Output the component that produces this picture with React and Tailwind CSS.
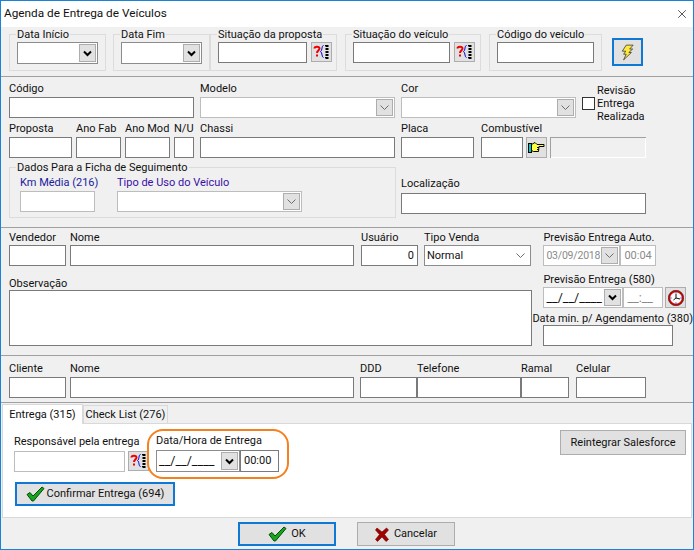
import React from 'react';
import { X } from 'lucide-react';

const inputBorder = 'border border-[#7a7a7a] bg-white';
const softBorder = 'border border-[#bdbdbd] bg-white';

const Chevron = ({ soft }) => (
  <svg width="11" height="7" viewBox="0 0 11 7" fill="none">
    <path d={soft ? 'M1.5 1.5 L5.5 5.5 L9.5 1.5' : 'M2 1.5 L5.5 5 L9 1.5'} stroke={soft ? '#6d6d6d' : '#000'} strokeWidth={soft ? 1 : 2} />
  </svg>
);

const Combo = ({ w, h = 'h-[22px]', soft, thin, flat, value, disabled, mask }) => (
  <div className={`${w} ${h} shrink-0 flex items-stretch ${soft ? softBorder : 'border border-[#8c8c8c] bg-white'} ${disabled ? 'text-[#8a8a8a]' : ''}`}>
    <div className="flex-1 overflow-hidden whitespace-nowrap pl-[2px] flex items-center">
      {mask ? <span className="text-[12.5px]">__/__/____</span> : value}
    </div>
    <div className={`w-[17px] m-[1px] flex items-center justify-center ${flat ? '' : 'border border-[#adadad] bg-[#e1e1e1]'} ${disabled ? 'bg-[#cfcfcf]' : ''}`}>
      <Chevron soft={thin} />
    </div>
  </div>
);

const Box = ({ w, h = 'h-[21px]', soft, right, children, className = '' }) => (
  <div className={`${w} ${h} shrink-0 ${soft ? softBorder : inputBorder} px-[3px] flex items-center ${right ? 'justify-end' : ''} ${className}`}>{children}</div>
);

const Field = ({ label, children, className = '', labelClass = 'leading-[16px]' }) => (
  <div className={`flex flex-col ${className}`}>
    <div className={`h-[16px] whitespace-nowrap ${labelClass}`}>{label}</div>
    {children}
  </div>
);

const IconBtn = ({ children, className = 'w-[21px] h-[20px]' }) => (
  <button className={`${className} border border-[#adadad] bg-[#e1e1e1] flex items-center justify-center shrink-0`}>{children}</button>
);

const HelpIcon = () => (
  <svg width="17" height="16" viewBox="0 0 17 16">
    <path d="M1.5 4.5 C1.5 2.2 6.5 2 6.5 4.5 C6.5 6.5 4 6.5 4 9" fill="none" stroke="#f00000" strokeWidth="2" />
    <rect x="3" y="10.5" width="2" height="2" fill="#f00000" />
    <path d="M10.5 1.5 C8.5 1.5 9.5 6.5 7.5 7.5 C9.5 8.5 8.5 13.5 10.5 13.5" fill="none" stroke="#0000e0" strokeWidth="1" />
    <path d="M14 1 V15" stroke="#000" strokeWidth="3" strokeDasharray="2 1" />
    <path d="M12 1.5 H14 M12 13.5 H14" stroke="#000" strokeWidth="1" />
  </svg>
);

const Bolt = () => (
  <svg width="13" height="17" viewBox="0 0 15 18">
    <path d="M6 0.5 H14 L10 5 H13.5 L9 9 H12 L3 17.5 L6 11 H3 L5.5 7.5 H1.5 Z" fill="#ffe93b" stroke="#333" strokeWidth="0.9" />
  </svg>
);

const Hand = () => (
  <svg width="17" height="13" viewBox="0 0 17 13">
    <rect x="0.5" y="2.5" width="3" height="9" fill="#00c8c8" stroke="#000" strokeWidth="1" />
    <path d="M3.5 3.5 L7 1.5 L9 3.5 H16 V5.5 H11 L10.5 10.5 H5.5 L3.5 9.5 Z" fill="#ffff40" stroke="#000" strokeWidth="1" />
    <path d="M9 6.5 H11 M9 8.5 H10.5" stroke="#000" strokeWidth="1" />
  </svg>
);

const Clock = () => (
  <svg width="16" height="16" viewBox="0 0 16 16">
    <circle cx="8" cy="8" r="6.8" fill="#fafafa" stroke="#d80000" strokeWidth="2" />
    <circle cx="8" cy="8" r="7.7" fill="none" stroke="#222" strokeWidth="0.6" />
    <path d="M8 4 V8 L5.5 10 M8 8 L12 9" fill="none" stroke="#101010" strokeWidth="1" />
    <path d="M8 2.5 V3.5 M8 12.5 V13.5 M2.5 8 H3.5 M12.5 8 H13.5" stroke="#1010c0" strokeWidth="1" />
  </svg>
);

const Check = () => (
  <svg width="19" height="16" viewBox="0 0 19 16">
    <path d="M1 8.5 L4 6.5 L7 10 L16 1 L18 2.5 L7.5 15 H6 Z" fill="#17a51b" stroke="#07480f" strokeWidth="1" />
  </svg>
);

const Cross = () => (
  <svg width="14" height="15" viewBox="0 0 14 15">
    <path d="M2 1 L7 5 L11.5 1 L13.5 3 L9.5 7.5 L13.5 12.5 L11 14.5 L7 10 L2.5 14.5 L0.5 12.5 L4.5 7.5 L0.5 3 Z" fill="#a00000" stroke="#700000" strokeWidth="0.6" />
  </svg>
);

const Group = ({ legend, className = '', children }) => (
  <fieldset className={`border border-[#dcdcdc] min-w-0 ${className}`}>
    <legend className="ml-[6px] px-[1px] h-[14px] leading-[16px] whitespace-nowrap">{legend}</legend>
    {children}
  </fieldset>
);

const Hr = () => <div className="h-[1px] bg-[#a0a0a0]" />;

export default function App() {
  return (
    <div className="w-[694px] h-[550px] border border-[#1883d7] bg-[#f0f0f0] text-[11px] leading-[14px] text-[#111] flex flex-col overflow-hidden font-['Roboto',sans-serif]">
      {/* title bar */}
      <div className="h-[26px] shrink-0 bg-white flex items-center justify-between pl-[3px] pr-[4px]">
        <span className="text-[11.8px] pb-[2px]">Agenda de Entrega de Veículos</span>
        <X className="w-[14px] h-[14px] text-[#111]" strokeWidth={1.2} />
      </div>

      {/* filtros */}
      <div className="h-[49px] shrink-0 flex items-start pl-[8px]">
        <Group legend="Data Início" className="w-[97px] mr-[7px] h-[44px]"><div className="px-[7px] pt-[1px]"><Combo w="w-[81px]" /></div></Group>
        <Group legend="Data Fim" className="w-[97px] h-[44px]"><div className="px-[7px] pt-[1px]"><Combo w="w-[81px]" /></div></Group>
        <Group legend="Situação da proposta" className="w-[127px] mr-[8px] h-[44px]">
          <div className="flex gap-[4px] pl-[7px] pt-[1px]"><Box w="w-[89px]" /><IconBtn><HelpIcon /></IconBtn></div>
        </Group>
        <Group legend="Situação do veículo" className="w-[136px] mr-[8px] h-[44px]">
          <div className="flex gap-[4px] pl-[7px] pt-[1px]"><Box w="w-[97px]" /><IconBtn><HelpIcon /></IconBtn></div>
        </Group>
        <Group legend="Código do veículo" className="w-[113px] mr-[10px] h-[44px]"><div className="px-[7px] pt-[1px]"><Box w="w-[97px]" /></div></Group>
        <button className="w-[31px] h-[28px] mt-[11px] border-2 border-[#0f78d4] bg-[#e1e1e1] flex items-center justify-center"><Bolt /></button>
      </div>
      <Hr />

      {/* veiculo */}
      <div className="h-[150px] shrink-0 pl-[8px] pt-[4px]">
        <div className="flex h-[37px]">
          <Field label="Código" className="w-[185px] mr-[6px]"><Box w="w-[185px]" /></Field>
          <Field label="Modelo" className="w-[195px] mr-[6px]"><Combo w="w-[195px]" h="h-[21px]" soft thin /></Field>
          <Field label="Cor" className="w-[175px] mr-[6px]"><Combo w="w-[175px]" h="h-[21px]" soft thin /></Field>
          <div className="flex items-start h-[37px]">
            <div className="w-[13px] h-[13px] border border-[#333] bg-white mt-[16px] mr-[2px]" />
            <div className="leading-[13px] pt-[3px]">Revisão<br />Entrega<br />Realizada</div>
          </div>
        </div>
        <div className="flex mt-[3px]">
          <Field label="Proposta" className="w-[63px] mr-[4px]"><Box w="w-[63px]" /></Field>
          <Field label="Ano Fab" className="w-[45px] mr-[4px]"><Box w="w-[45px]" /></Field>
          <Field label="Ano Mod" className="w-[45px] mr-[4px]"><Box w="w-[45px]" /></Field>
          <Field label="N/U" className="w-[20px] mr-[6px]"><Box w="w-[20px]" /></Field>
          <Field label="Chassi" className="w-[195px] mr-[6px]"><Box w="w-[195px]" /></Field>
          <Field label="Placa" className="w-[73px] mr-[7px]"><Box w="w-[73px]" /></Field>
          <Field label="Combustível" className="w-[42px] mr-[3px]"><Box w="w-[42px]" /></Field>
          <IconBtn className="w-[21px] h-[21px] mt-[16px] mr-[3px]"><Hand /></IconBtn>
          <div className="w-[96px] h-[21px] mt-[16px] bg-[#f0f0f0] border-l border-t border-[#a0a0a0] shadow-[inset_-1px_-1px_0_#fff]" />
        </div>
        <div className="flex mt-[2px]">
          <Group legend="Dados Para a Ficha de Seguimento" className="w-[387px] h-[58px] mr-[5px]">
            <div className="flex pl-[10px] pt-[1px]">
              <Field label="Km Média (216)" labelClass="text-[#1a1a9c] leading-[16px]" className="w-[75px] mr-[22px]"><Box w="w-[75px]" soft /></Field>
              <Field label="Tipo de Uso do Veículo" labelClass="text-[#3a0fa8] leading-[16px]" className="w-[185px]"><Combo w="w-[185px]" h="h-[21px]" soft thin /></Field>
            </div>
          </Group>
          <Field label="Localização" labelClass="leading-[13px]" className="w-[245px] mt-[17px]"><Box w="w-[245px]" /></Field>
        </div>
      </div>
      <Hr />

      {/* vendedor */}
      <div className="h-[127px] shrink-0 pl-[8px] pt-[1px] flex">
        <div className="w-[524px] flex flex-col">
          <div className="flex">
            <Field label="Vendedor" labelClass="leading-[18px]" className="mr-[4px]"><Box w="w-[57px]" /></Field>
            <Field label="Nome" labelClass="leading-[18px]" className="mr-[7px]"><Box w="w-[284px]" /></Field>
            <Field label="Usuário" labelClass="leading-[18px]" className="mr-[6px]"><Box w="w-[57px]" right>0</Box></Field>
            <Field label="Tipo Venda" labelClass="leading-[18px]"><Combo w="w-[107px]" h="h-[21px]" value="Normal" thin flat /></Field>
          </div>
          <Field label="Observação" labelClass="leading-[20px]" className="mt-[8px]"><Box w="w-[523px]" h="h-[56px]" /></Field>
        </div>
        <div className="flex flex-col">
          <div className="pl-[11px]">
            <Field label="Previsão Entrega Auto." labelClass="leading-[18px]">
              <div className="flex">
                <Combo w="w-[77px]" h="h-[21px]" soft thin disabled value={<span className="text-[10.5px] tracking-[-0.2px]">03/09/2018</span>} />
                <Box w="w-[36px]" soft className="text-[#8a8a8a]">00:04</Box>
              </div>
            </Field>
            <Field label="Previsão Entrega (580)" labelClass="leading-[18px]" className="mt-[5px]">
              <div className="flex items-start">
                <Combo w="w-[80px]" h="h-[21px]" soft mask />
                <Box w="w-[40px]" soft className="text-[#8a8a8a] text-[12.5px]">__:__</Box>
                <IconBtn className="w-[21px] h-[21px] ml-[2px]"><Clock /></IconBtn>
              </div>
            </Field>
          </div>
          <Field label="Data min. p/ Agendamento (380)" labelClass="leading-[20px]" className="mt-[1px]">
            <Box w="w-[130px] ml-[11px]" />
          </Field>
        </div>
      </div>
      <Hr />

      {/* cliente */}
      <div className="h-[46px] shrink-0 pl-[8px] pt-[5px] flex">
        <Field label="Cliente" className="mr-[4px]"><Box w="w-[57px]" /></Field>
        <Field label="Nome" className="mr-[6px]"><Box w="w-[284px]" /></Field>
        <Field label="DDD"><Box w="w-[57px]" /></Field>
        <Field label="Telefone"><Box w="w-[104px]" /></Field>
        <Field label="Ramal" className="mr-[7px]"><Box w="w-[48px]" /></Field>
        <Field label="Celular"><Box w="w-[70px]" /></Field>
      </div>

      {/* abas */}
      <div className="flex items-end h-[21px] shrink-0 pl-[1px] border-t border-[#a0a0a0]">
        <div className="w-[81px] h-[20px] bg-white border border-b-0 border-[#d9d9d9] flex items-center justify-center z-10 -mb-[1px]">Entrega (315)</div>
        <div className="w-[85px] h-[18px] bg-[#f0f0f0] border border-b-0 border-[#d9d9d9] flex items-center justify-center whitespace-nowrap">Check List (276)</div>
      </div>
      <div className="h-[95px] shrink-0 mx-[1px] bg-white border border-[#d9d9d9] relative pl-[11px] pt-[10px] flex flex-col">
        <div className="flex justify-between pr-[5px]">
          <div className="flex">
            <Field label="Responsável pela entrega" labelClass="leading-[14px]" className="mt-[1px] mr-[7px]">
              <div className="flex gap-[3px] w-[135px]">
                <Box w="w-[111px]" soft />
                <IconBtn><HelpIcon /></IconBtn>
              </div>
            </Field>
            <Field label="Data/Hora de Entrega" labelClass="leading-[14px]">
              <div className="flex">
                <Combo w="w-[84px]" mask />
                <Box w="w-[39px]" h="h-[22px]">00:00</Box>
              </div>
            </Field>
          </div>
          <button className="w-[126px] h-[25px] -mt-[4px] border border-[#adadad] bg-[#e1e1e1] text-[#111]">Reintegrar Salesforce</button>
        </div>
        <button className="w-[160px] h-[24px] mt-[10px] ml-[1px] border-2 border-[#0f78d4] bg-[#e1e1e1] flex items-center justify-center gap-[2px]"><Check />Confirmar Entrega (694)</button>
        {/* contorno laranja */}
        <div className="absolute left-[144px] top-[5px] w-[142px] h-[50px] border-[2px] border-[#f5801e] rounded-[16px] pointer-events-none" />
      </div>

      {/* rodape */}
      <div className="flex-1 flex items-start gap-[21px] pl-[237px] pt-[4px]">
        <button className="w-[98px] h-[24px] border-2 border-[#0f78d4] bg-[#e1e1e1] flex items-center justify-center gap-[4px]"><Check />OK</button>
        <button className="w-[98px] h-[24px] border border-[#adadad] bg-[#e1e1e1] flex items-center justify-center gap-[5px]"><Cross />Cancelar</button>
      </div>
    </div>
  );
}
